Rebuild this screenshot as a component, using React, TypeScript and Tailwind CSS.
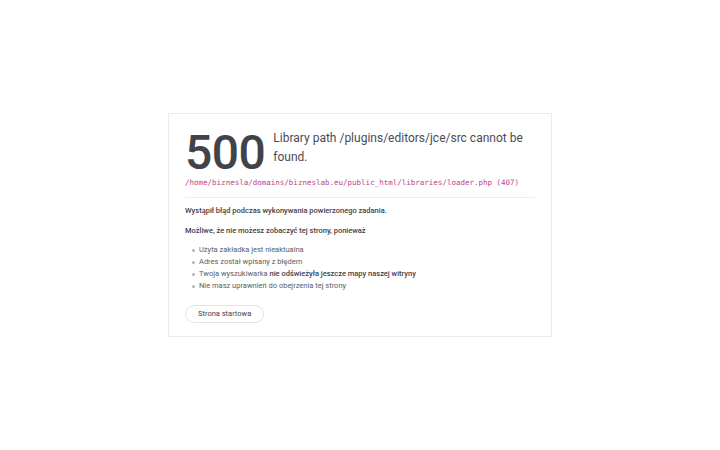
import React from 'react';

const reasons: React.ReactNode[] = [
  'Użyta zakładka jest nieaktualna',
  'Adres został wpisany z błędem',
  <>
    Twoja wyszukiwarka <span className="font-medium text-[#3f4147]">nie odświeżyła jeszcze mapy naszej witryny</span>
  </>,
  'Nie masz uprawnień do obejrzenia tej strony',
];

export default function App() {
  return (
    <div className="min-h-screen bg-white flex items-center justify-center font-['Roboto',sans-serif]">
      <div className="w-[384px] border border-[#ececec] bg-white px-4 pt-[15px] pb-[13px]">
        {/* Header */}
        <div className="flex items-start gap-[8px]">
          <div className="text-[48px] leading-none font-medium text-[#41434a] tracking-[-0.5px]">500</div>
          <h1 className="text-[12px] leading-[19px] text-[#4a4c53]">
            Library path /plugins/editors/jce/src cannot be found.
          </h1>
        </div>
        <div className="font-['DejaVu_Sans_Mono',monospace] text-[7.5px] leading-[12px] text-[#c2417f]">
          /home/biznesla/domains/bizneslab.eu/public_html/libraries/loader.php (407)
        </div>

        <div className="mt-[8px] border-t border-[#eeeeee]" />

        {/* Body */}
        <div className="pt-[7px] text-[7.5px] leading-[12px] text-[#5a5c63]">
          <p className="font-medium text-[#3f4147]">Wystąpił błąd podczas wykonywania powierzonego zadania.</p>
          <p className="mt-[8px] font-medium text-[#3f4147]">Możliwe, że nie możesz zobaczyć tej strony, ponieważ</p>
          <ul className="mt-[7px] pl-[7px]">
            {reasons.map((r, i) => (
              <li key={i} className="flex items-center gap-[4px]">
                <span className="w-[3px] h-[3px] rounded-full bg-[#b5b5b5]" />
                <span>{r}</span>
              </li>
            ))}
          </ul>
          <button className="mt-[13px] h-[18px] px-[12px] rounded-full border border-[#e3e3e3] text-[7.5px] text-[#41434a] bg-white">
            Strona startowa
          </button>
        </div>
      </div>
    </div>
  );
}
